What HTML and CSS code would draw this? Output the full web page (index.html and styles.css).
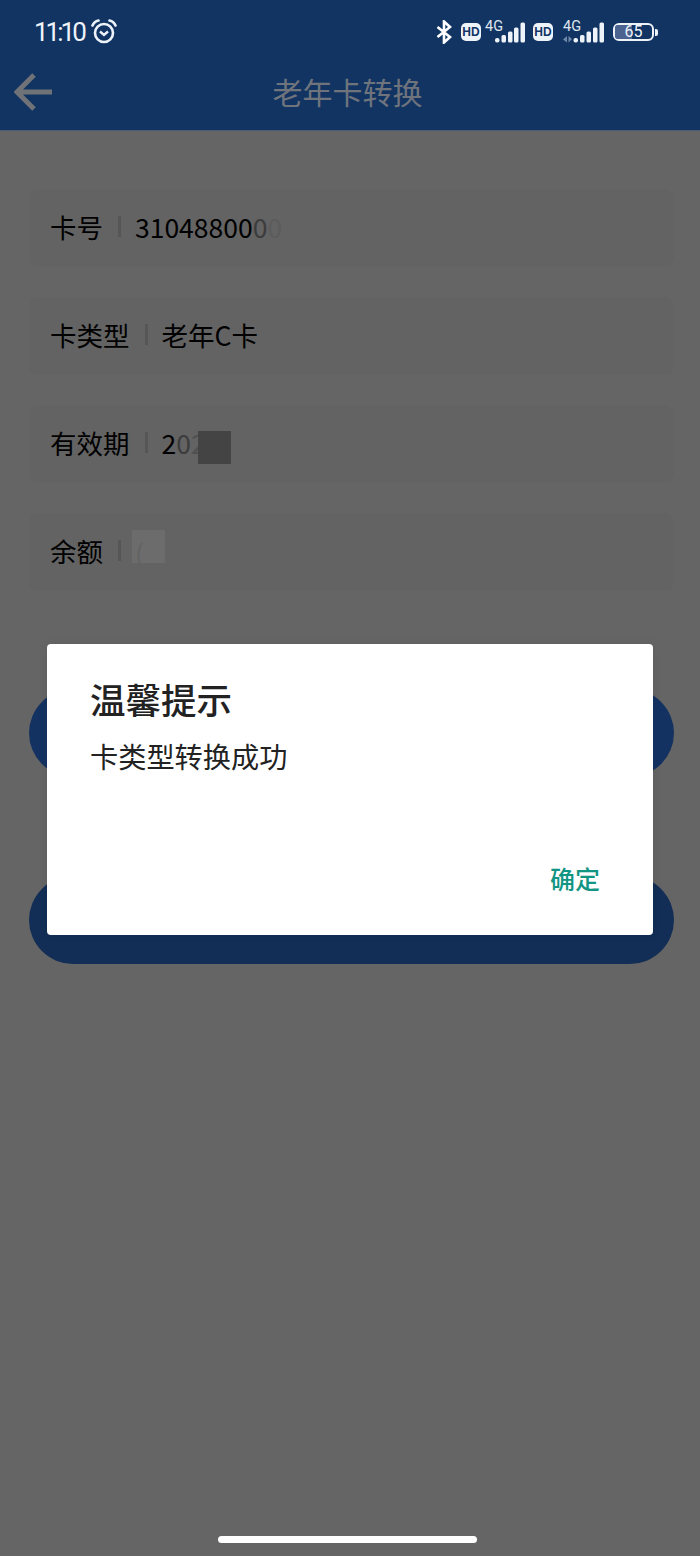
FILE: index.html
```html
<!DOCTYPE html>
<html>
<head>
  <title>老年卡转换</title>
  <link rel="stylesheet" href="styles.css">
</head>
<body>
  <header class="header">
    <div class="status">
      <div class="status-left">
        <span class="clock">11:10</span>
        <svg class="alarm" width="26" height="26" viewBox="0 0 26 26">
          <circle cx="13" cy="14" r="9" fill="none" stroke="#eef3f9" stroke-width="2.600"/>
          <path d="M9 12.500l4 3.500 4-3.500" fill="none" stroke="#eef3f9" stroke-width="2.400"/>
          <path d="M1.500 6.500C2.500 4 5 2 7.500 1.500M24.500 6.500C23.500 4 21 2 18.500 1.500" fill="none" stroke="#eef3f9" stroke-width="2.600" stroke-linecap="round"/>
        </svg>
      </div>
      <div class="status-right">
        <svg class="bluetooth" width="16" height="24" viewBox="0 0 16 24">
          <path d="M1.500 7L14 17l-6 5.500v-21L14 7 1.500 17" fill="none" stroke="#fff" stroke-width="2.600"/>
        </svg>
        <span class="hd">HD</span>
        <svg class="signal" width="44" height="36" viewBox="0 -5 44 36">
          <text class="net" x="4" y="12">4G</text>
          <rect x="14" y="19" width="4.500" height="4.500" rx="2" fill="#eef3f9"/>
          <rect x="20.500" y="16" width="4.500" height="7.500" rx="1.500" fill="#eef3f9"/>
          <rect x="27" y="12.500" width="4.500" height="11" rx="1.500" fill="#eef3f9"/>
          <rect x="33" y="8.500" width="4.500" height="15" rx="1.500" fill="#eef3f9"/>
          <rect x="39.500" y="3.500" width="4.500" height="20" rx="1.500" fill="#eef3f9"/>
        </svg>
        <span class="hd hd-second">HD</span>
        <svg class="signal signal-second" width="44" height="36" viewBox="0 -5 44 36">
          <text class="net" x="3" y="12">4G</text>
          <path d="M7 17v6.500l-4-3zM8.500 23.500V17l3.500 3z" fill="#6f88aa"/>
          <rect x="13.500" y="19" width="4.500" height="4.500" rx="2" fill="#eef3f9"/>
          <rect x="20" y="16" width="4.500" height="7.500" rx="1.500" fill="#eef3f9"/>
          <rect x="26.500" y="12.500" width="4.500" height="11" rx="1.500" fill="#eef3f9"/>
          <rect x="33" y="8.500" width="4.500" height="15" rx="1.500" fill="#eef3f9"/>
          <rect x="39.500" y="3.500" width="4.500" height="20" rx="1.500" fill="#eef3f9"/>
        </svg>
        <div class="battery">
          <div class="battery-body">
            <div class="battery-fill"></div>
            <span class="battery-num">65</span>
          </div>
          <div class="battery-tip"></div>
        </div>
      </div>
    </div>
    <div class="titlebar">
      <svg class="back" width="40" height="40" viewBox="0 0 40 40">
        <path d="M20 3L3 20l17 17M3 20h35" fill="none" stroke="#6f7276" stroke-width="5"/>
      </svg>
      <h1 class="title">老年卡转换</h1>
    </div>
  </header>

  <main class="content">
    <div class="row">
      <span class="label">卡号</span><i class="sep"></i>
      <span class="value">31048800<span class="fade2">0</span><span class="fade4">0</span></span>
    </div>
    <div class="row">
      <span class="label">卡类型</span><i class="sep"></i>
      <span class="value">老年C卡</span>
    </div>
    <div class="row">
      <span class="label">有效期</span><i class="sep"></i>
      <span class="value">2<span class="fade2">0</span><span class="fade3">2</span></span>
      <i class="blot blot-date"></i>
    </div>
    <div class="row">
      <span class="label">余额</span><i class="sep"></i>
      <i class="blot blot-money">(</i>
    </div>
    <div class="actions">
      <div class="btn btn-first"></div>
      <div class="btn btn-second"></div>
    </div>
  </main>

  <div class="dialog">
    <h2 class="dialog-title">温馨提示</h2>
    <p class="dialog-msg">卡类型转换成功</p>
    <div class="dialog-foot">
      <span class="dialog-ok">确定</span>
    </div>
  </div>

  <div class="home-bar"></div>
</body>
</html>
```

FILE: styles.css
```css
* {
  box-sizing: border-box;
}
html, body {
  margin: 0;
  height: 100%;
}
body {
  position: relative;
  width: 700px;
  height: 1556px;
  overflow: hidden;
  background-color: #656565;
  color: #000;
  font-family: "Noto Sans CJK SC", "Noto Sans", sans-serif;
}

/* header */
.header {
  height: 131px;
  background-color: #123463;
  border-bottom: 1px solid #4a5a72;
}
.status {
  display: flex;
  justify-content: space-between;
  align-items: center;
  height: 62px;
  padding: 2px 42px 0 34px;
}
.status-left, .status-right {
  display: flex;
  align-items: center;
}
.clock {
  color: #eef3f9;
  font-family: Roboto, sans-serif;
  font-size: 26px;
  letter-spacing: -3px;
}
.alarm {
  margin-left: 7px;
}
.bluetooth {
  margin-right: 9px;
}
.hd {
  width: 20px;
  height: 18px;
  border-radius: 5px;
  background-color: #eef3f9;
  color: #123463;
  font-family: "Liberation Sans", sans-serif;
  font-size: 12px;
  font-weight: 700;
  line-height: 18px;
  text-align: center;
}
.hd-second {
  margin-left: 8px;
}
.signal-second {
  margin-left: 7px;
}
.net {
  fill: #dfe6ef;
  font-family: Roboto, sans-serif;
  font-size: 14.500px;
}
.battery {
  display: flex;
  align-items: center;
  margin-left: 9px;
}
.battery-body {
  position: relative;
  width: 41px;
  height: 18px;
  border: 2px solid #eef3f9;
  border-radius: 6px;
}
.battery-fill {
  width: 17px;
  height: 100%;
  border-radius: 3px 0 0 3px;
  background-color: #4b648f;
}
.battery-num {
  position: absolute;
  inset: 0;
  color: #eef3f9;
  font-family: Roboto, sans-serif;
  font-size: 16px;
  line-height: 14px;
  text-align: center;
}
.battery-tip {
  width: 3px;
  height: 7px;
  margin-left: 1px;
  border-radius: 0 2px 2px 0;
  background-color: #eef3f9;
}
.titlebar {
  position: relative;
  display: flex;
  align-items: center;
  justify-content: center;
  height: 60px;
}
.back {
  position: absolute;
  left: 14px;
  top: 10px;
}
.title {
  margin: 0 0 2px -5px;
  color: #6f747c;
  font-size: 30px;
  font-weight: 400;
}

/* card info */
.content {
  padding: 58px 26px 0 29px;
}
.row {
  position: relative;
  display: flex;
  align-items: center;
  height: 78px;
  margin-bottom: 30px;
  padding: 0 0 4px 21px;
  border-radius: 10px;
  background-color: #636363;
  font-size: 26.500px;
}
.sep {
  width: 3px;
  height: 21px;
  margin: 0 14px 0 15px;
  background-color: #565656;
}
.fade2 { color: #3c3c3c; }
.fade3 { color: #505050; }
.fade4 { color: #5c5c5c; }
.blot {
  position: absolute;
  width: 33px;
  height: 33px;
  font-style: normal;
  line-height: 33px;
}
.blot-date {
  left: 169px;
  top: 26px;
  background-color: #444;
}
.blot-money {
  left: 103px;
  top: 17px;
  padding: 6px 0 0 3px;
  background-color: #6c6c6c;
  color: #626262;
}

/* buttons behind the dialog */
.actions {
  display: flex;
  flex-direction: column;
  gap: 99px;
  margin-top: 98px;
}
.btn {
  height: 88px;
  border-radius: 44px;
}
.btn-first {
  background-color: #143261;
}
.btn-second {
  background-color: #122e56;
}

/* dialog */
.dialog {
  position: absolute;
  left: 47px;
  top: 644px;
  display: flex;
  flex-direction: column;
  width: 606px;
  height: 291px;
  padding: 30px 53px 39px 43px;
  border-radius: 4px;
  background-color: #fff;
  box-shadow: 0 0 10px rgba(0, 0, 0, 0.08);
}
.dialog-title {
  margin: 0;
  color: #222;
  font-size: 35.500px;
  font-weight: 500;
  line-height: 50px;
}
.dialog-msg {
  margin: 12px 0 0;
  color: #222;
  font-size: 28.200px;
  line-height: 40px;
}
.dialog-foot {
  display: flex;
  justify-content: flex-end;
  margin-top: auto;
}
.dialog-ok {
  color: #129583;
  font-size: 25px;
  font-weight: 500;
  line-height: 36px;
}

.home-bar {
  position: absolute;
  left: 218px;
  top: 1536px;
  width: 259px;
  height: 7px;
  border-radius: 4px;
  background-color: #fff;
}
```
